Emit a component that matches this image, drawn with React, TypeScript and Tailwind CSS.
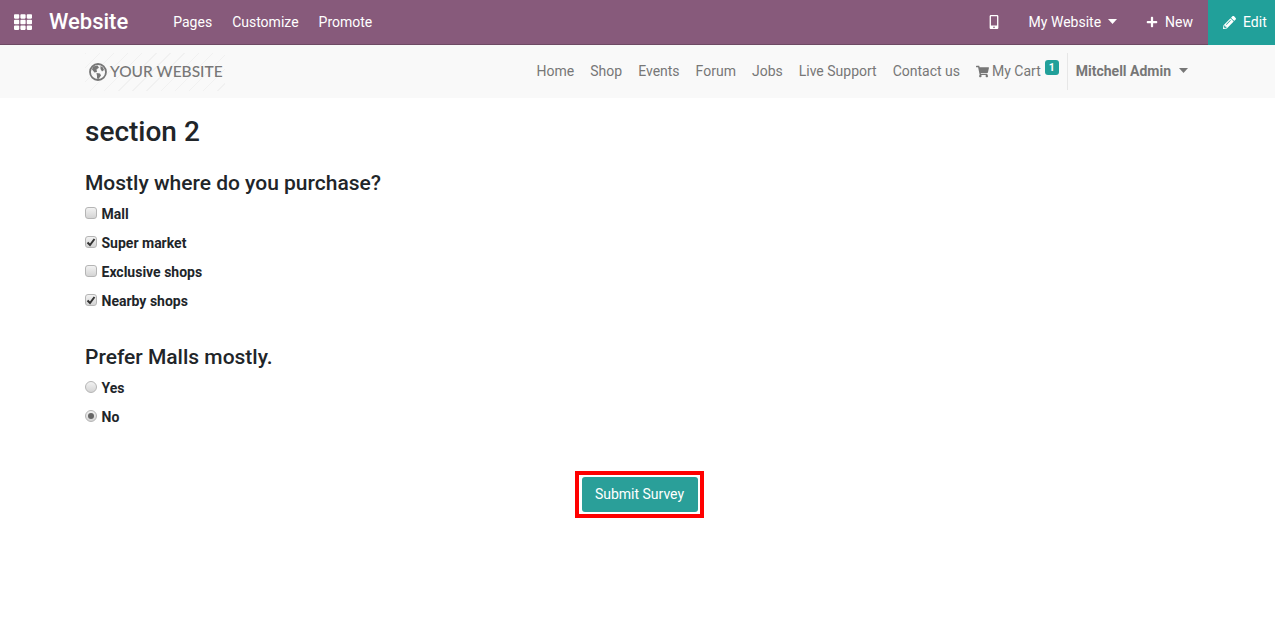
import React from 'react';
import { FaTh, FaMobileAlt, FaPlus, FaPencilAlt, FaShoppingCart } from 'react-icons/fa';

const Caret: React.FC<{ color: string; gap: string }> = ({ color, gap }) => (
  <svg width="9" height="5" viewBox="0 0 9 5" className={`${gap} mb-[2px]`}>
    <path d="M0 0h9L4.5 5z" fill={color} />
  </svg>
);

const Globe: React.FC = () => (
  <svg width="18" height="18" viewBox="0 0 18 18">
    <circle cx="9" cy="9" r="8" fill="none" stroke="#777" strokeWidth="1.8" />
    <path d="M4 3.5 8.5 2.5 10 4.5 7.5 6.5 8 9 5.5 9.5 3 6.5z" fill="#777" />
    <path d="M7.5 10 11 10.5 12 12.5 9.5 16 8 15.5 8 13z" fill="#777" />
    <path d="M11.5 3 14 4.5 15 7 13 8.5 11.5 6z" fill="#777" />
  </svg>
);

const CheckRow: React.FC<{ label: string; checked?: boolean }> = ({ label, checked }) => (
  <div className="flex items-center h-[29px]">
    <span className="w-3 h-3 mr-[4.5px] mb-[4px] rounded-[3px] border border-[#b5b5b5] bg-gradient-to-b from-[#f2f2f2] to-[#d4d4d4] flex items-center justify-center">
      {checked && (
        <svg width="10" height="10" viewBox="0 0 10 10">
          <path d="M1.5 5.5 4 8l4.5-6" fill="none" stroke="#333" strokeWidth="2" />
        </svg>
      )}
    </span>
    <span className="font-bold text-[14px] text-[#212529]">{label}</span>
  </div>
);

const RadioRow: React.FC<{ label: string; checked?: boolean }> = ({ label, checked }) => (
  <div className="flex items-center h-[29px]">
    <span className="w-3 h-3 mr-[4.5px] mb-[4px] rounded-full border border-[#b5b5b5] bg-gradient-to-b from-[#f2f2f2] to-[#d4d4d4] flex items-center justify-center">
      {checked && <span className="w-[6px] h-[6px] rounded-full bg-[#666]" />}
    </span>
    <span className="font-bold text-[14px] text-[#212529]">{label}</span>
  </div>
);

const navLinks = ['Home', 'Shop', 'Events', 'Forum', 'Jobs', 'Live Support', 'Contact us'];

const App: React.FC = () => {
  return (
    <div className="min-h-[636px] bg-white font-['Roboto',sans-serif] text-[14px] text-[#212529]">
      {/* Top bar */}
      <header className="h-[45px] bg-[#875A7B] border-b border-[#6e4a64] flex items-center text-white">
        <FaTh className="ml-[14px] text-[18px]" />
        <span className="ml-[17px] mb-[1px] text-[22px] font-medium">Website</span>
        <div className="ml-[45px] flex items-center gap-[20px]">
          <span>Pages</span>
          <span>Customize</span>
          <span>Promote</span>
        </div>
        <div className="ml-auto flex items-center h-[45px]">
          <FaMobileAlt className="text-[14px] mr-[28px]" />
          <span>My Website</span>
          <Caret color="#fff" gap="ml-[7px]" />
          <FaPlus className="ml-[29px] text-[12px]" />
          <span className="ml-[7px] mr-[15px]">New</span>
          <div className="h-[45px] w-[67px] bg-[#21A09A] flex items-center pl-[15px] gap-[7px]">
            <FaPencilAlt className="text-[13px]" />
            <span>Edit</span>
          </div>
        </div>
      </header>

      {/* Website nav */}
      <nav className="h-[53px] bg-[#f9f9f9] pl-[85px] pr-[87px] flex items-center text-[#777]">
        <div className="w-[140px] h-[38px] flex items-center pl-[4px] bg-[repeating-linear-gradient(135deg,#f1f1f1_0px,#f1f1f1_1px,transparent_1px,transparent_10px)]">
          <Globe />
          <span className="ml-[3px] font-['Lato',sans-serif] text-[15.5px] font-medium text-[#777]">YOUR WEBSITE</span>
        </div>
        <div className="ml-auto flex items-center gap-[16px]">
          {navLinks.map((link) => (
            <span key={link}>{link}</span>
          ))}
          <span className="flex items-center">
            <FaShoppingCart className="text-[13px] mr-[3px]" />
            My Cart
            <span className="relative top-[-4px] ml-[4px] h-[15px] w-[14px] rounded-[3px] bg-[#21A09A] text-white text-[10.5px] font-bold flex items-center justify-center">1</span>
          </span>
        </div>
        <div className="ml-[8px] h-[37px] border-l border-[#e7e7e7] pl-[8px] flex items-center font-bold">
          Mitchell Admin
          <Caret color="#777" gap="ml-[8px]" />
        </div>
      </nav>

      {/* Survey */}
      <main className="px-[85px]">
        <h1 className="mt-[16px] text-[28px] leading-[36px] font-medium text-[#212529]">section 2</h1>
        <h2 className="mt-[18px] text-[21px] leading-[30px] font-medium">Mostly where do you purchase?</h2>
        <div className="mt-[2px]">
          <CheckRow label="Mall" />
          <CheckRow label="Super market" checked />
          <CheckRow label="Exclusive shops" />
          <CheckRow label="Nearby shops" checked />
        </div>
        <h2 className="mt-[26px] text-[21px] leading-[30px] font-medium">Prefer Malls mostly.</h2>
        <div className="mt-[2px]">
          <RadioRow label="Yes" />
          <RadioRow label="No" checked />
        </div>
        <div className="mt-[39px] flex justify-center">
          <div className="ml-[3px] border-[4px] border-[#ff0000] pl-[3px] pr-[2px] py-[2px]">
            <button className="block w-[116px] h-[35px] rounded-[3px] bg-[#2a9f99] text-white text-[14px]">Submit Survey</button>
          </div>
        </div>
      </main>
    </div>
  );
};

export default App;
